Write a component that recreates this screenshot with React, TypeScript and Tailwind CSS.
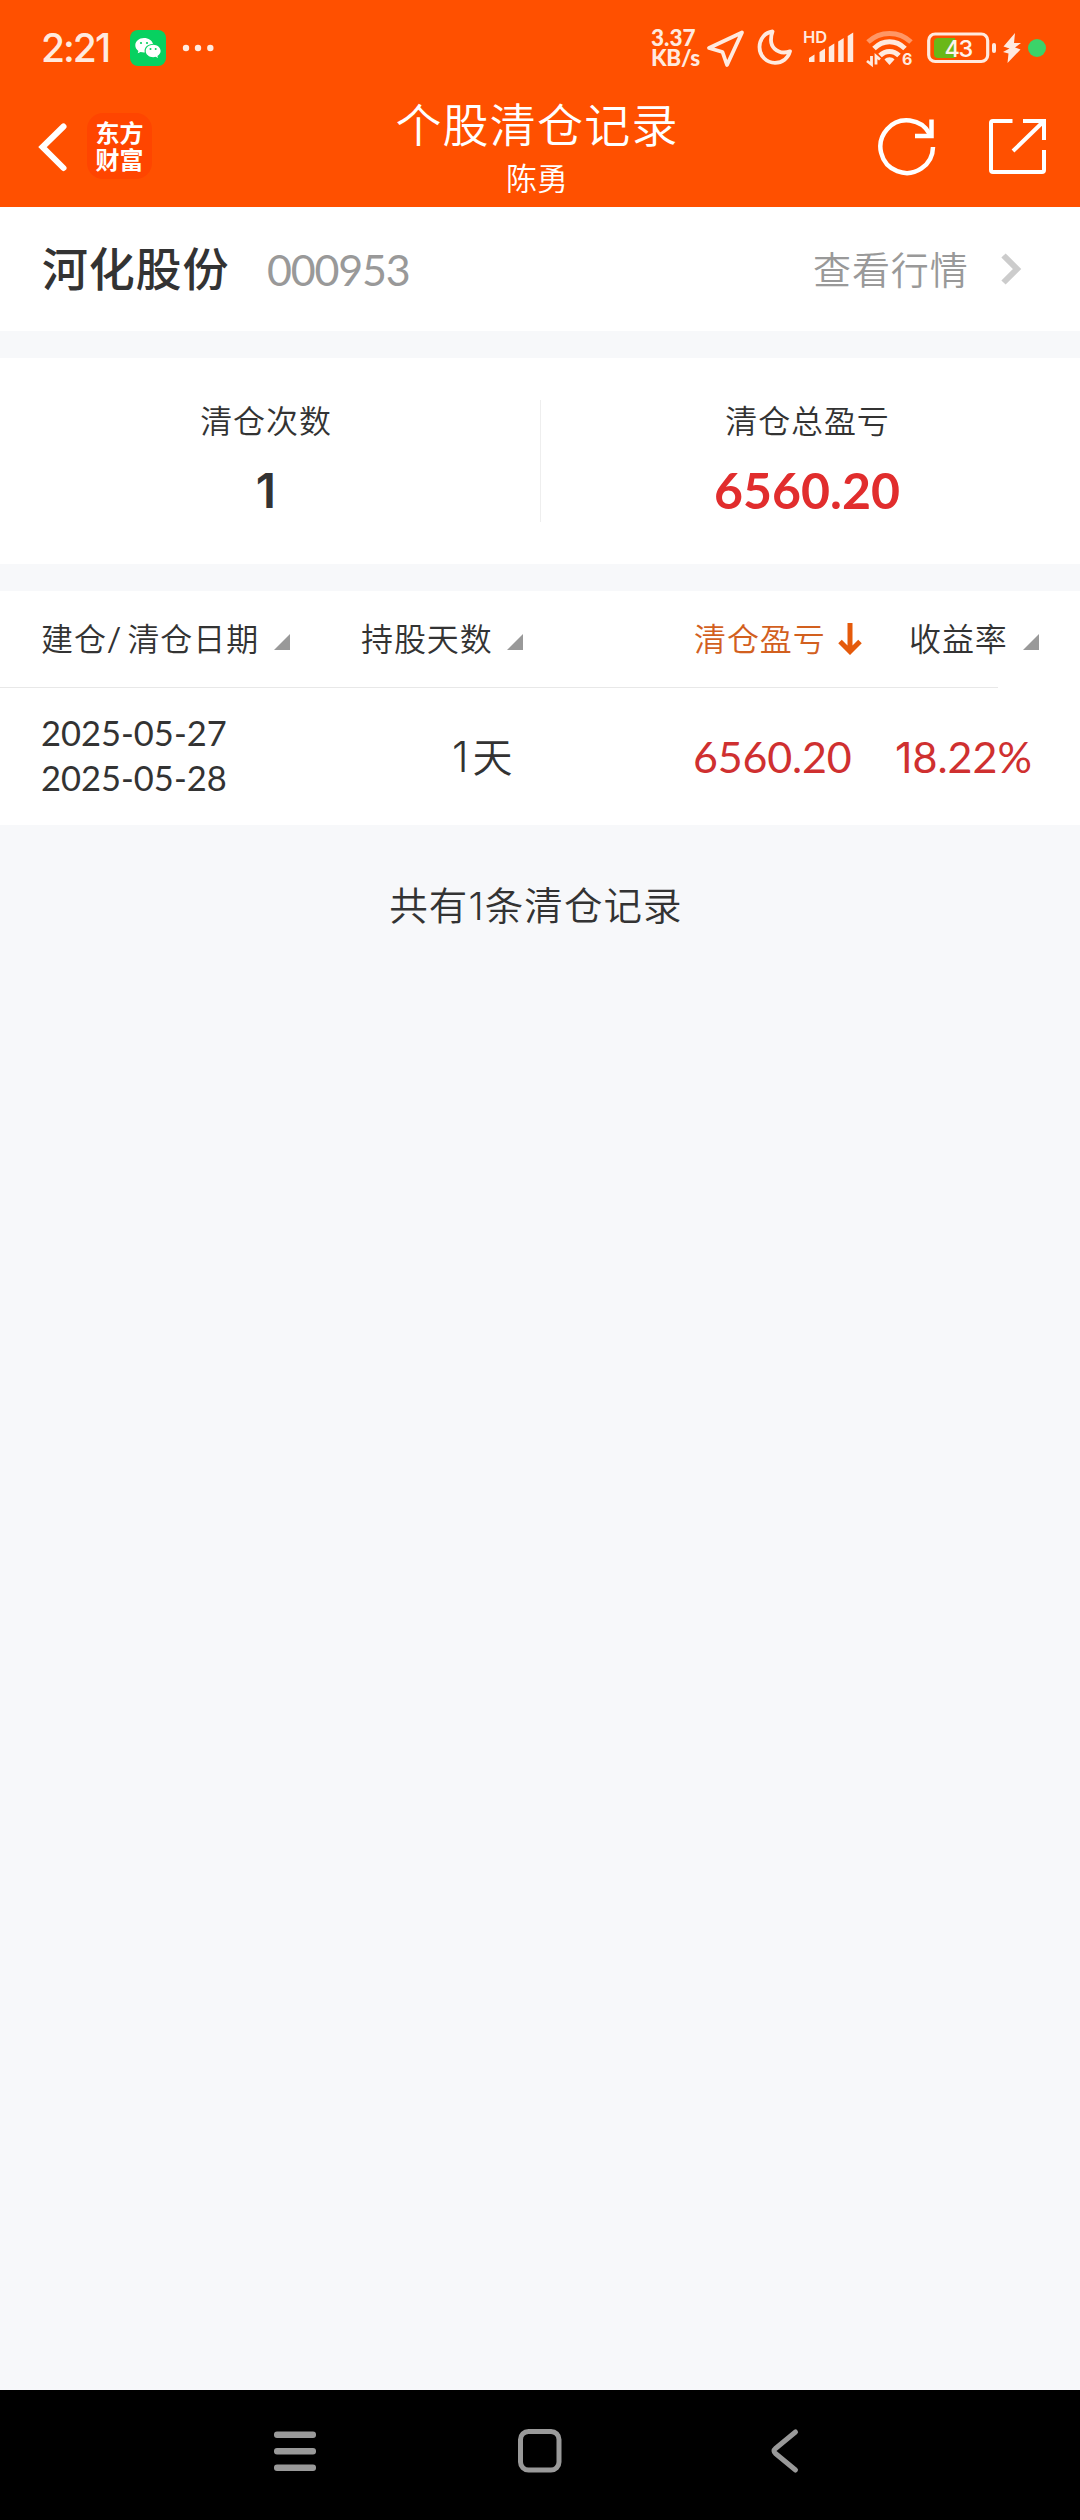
import React from "react";

const StatusBar: React.FC = () => {
  return (
    <div className="flex h-24 items-center pl-[41px] text-[#ffeadf]">
      <span className="w-[89px] shrink-0 font-['Inter'] text-[39px] font-medium leading-[50px] tracking-[-2px]">2:21</span>
      {/* WeChat */}
      <svg className="w-9 h-9" viewBox="0 0 36 36">
        <rect width="36" height="36" rx="8" fill="#07d160" />
        <path
          d="M14 8c-5 0-8.7 3.3-8.7 7.3 0 2.3 1.2 4.3 3.1 5.6l-.7 2.4 2.9-1.4c1.1.3 2.2.5 3.4.5h.8c-1.1-4.500 2.600-8.500 7.800-8.500h.4C22.200 10.500 18.500 8 14 8z"
          fill="#fff"
        />
        <path
          d="M23.200 14.800c-4.200 0-7.500 2.800-7.500 6.200s3.300 6.200 7.500 6.200c.9 0 1.700-.1 2.500-.4l2.300 1.200-.6-2c1.900-1.200 3.200-2.900 3.200-5 0-3.400-3.300-6.200-7.400-6.200z"
          fill="#fff"
        />
        <circle cx="11" cy="13" r="1.1" fill="#07d160" />
        <circle cx="17" cy="13" r="1.1" fill="#07d160" />
        <circle cx="20.500" cy="19" r="1" fill="#07d160" />
        <circle cx="25.700" cy="19" r="1" fill="#07d160" />
      </svg>
      <svg className="ml-4 w-8 h-3" viewBox="0 0 32 12" fill="currentColor">
        <circle cx="4" cy="6" r="3.200" />
        <circle cx="16" cy="6" r="3.200" />
        <circle cx="28.300" cy="6" r="3.200" />
      </svg>
      <div className="ml-[437px] w-[54px] font-['Lato'] text-[22.500px] font-black leading-[20px]">
        <div>3.37</div>
        <div className="tracking-[-0.3px]">KB/s</div>
      </div>
      {/* Location */}
      <svg
        className="w-[40px] h-[40px]"
        viewBox="0 0 40 40"
        fill="none"
        stroke="currentColor"
        strokeWidth="3.800"
        strokeLinejoin="round"
      >
        <path d="M37 4.500 4 20l13.500 4 4.500 13z" />
      </svg>
      {/* Moon */}
      <svg
        className="ml-[11px] w-[38px] h-[40px]"
        viewBox="0 0 38 40"
        fill="none"
        stroke="currentColor"
        strokeWidth="3.800"
        strokeLinejoin="round"
      >
        <path d="M16.500 3.500C8.500 4.500 3.500 11.500 3.500 19c0 9 7 15.800 15.500 15.800 7.500 0 13-4.500 15-11.500-2 .8-4 1.200-6 1.200-7.500 0-13-5.500-13-12.500 0-3 .5-6 1.500-8.500z" />
      </svg>
      {/* HD signal */}
      <svg className="ml-[9px] w-[52px] h-[44px] overflow-visible" viewBox="0 -4 52 44" fill="currentColor">
        <text x="0" y="13" fontFamily="Inter" fontWeight="600" fontSize="16.500">HD</text>
        <path d="M6 28l5.500-3.500V32H6zM16.500 22l5.500-3.500V32h-5.500zM25.800 17l5.500-3.500V32h-5.500zM35.200 11.500l5.500-3.500V32h-5.500zM44.700 6l5.500-3.500V32h-5.500z" />
      </svg>
      {/* Wi-Fi */}
      <svg className="ml-[11px] w-[48px] h-[44px] overflow-visible" viewBox="0 -4 48 44" fill="none" stroke="currentColor">
        <path d="M2 12C14 .5 33 .5 45 12" strokeWidth="5" opacity=".45" />
        <path d="M8 18.500c9-9 22-9 31 0" strokeWidth="5" />
        <path d="M14 25.500c5.500-5.500 13.500-5.500 19 0" strokeWidth="5" />
        <path d="M18.500 29.500c2.500-3 7.500-3 10 0L23.500 35z" fill="currentColor" stroke="none" />
        <path d="M1 31l4.500 3.500V26M10 34.500V26l4 3.500" strokeWidth="2.800" />
        <text x="36" y="34.500" fill="currentColor" stroke="none" fontFamily="Inter" fontWeight="700" fontSize="16">
          6
        </text>
      </svg>
      {/* Battery */}
      <svg className="ml-[13px] w-[70px] h-[32px]" viewBox="0 0 70 32" fill="none">
        <rect x="1.700" y="2" width="59" height="27.500" rx="6.500" stroke="currentColor" strokeWidth="3.200" />
        <rect x="65" y="11" width="4" height="10" rx="2" fill="currentColor" />
        <path d="M11 6h17v20H11a4 4 0 0 1-4-4V10a4 4 0 0 1 4-4z" fill="#6ab818" />
        <text x="17.500" y="24.500" fill="#fff3ec" fontFamily="Inter" fontWeight="500" fontSize="23.500" letterSpacing="-1.500">
          43
        </text>
      </svg>
      <svg className="ml-[5px] w-[20px] h-[32px]" viewBox="0 0 20 32" fill="currentColor">
        <path d="M13 1 1.500 14.500l6 2L1 20l5.500 1.500L5.500 31 18.500 17.500l-5.500-2L19 11h-7z" />
      </svg>
      <div className="ml-[6px] w-[18px] h-[18px] rounded-full bg-[#3bd369]"></div>
    </div>
  );
};

const Navbar: React.FC = () => {
  return (
    <nav className="flex h-[111px] pl-9 text-white">
      <svg
        className="mt-[24px] w-[34px] h-[54px]"
        viewBox="0 0 34 54"
        fill="none"
        stroke="currentColor"
        strokeWidth="6"
        strokeLinecap="round"
      >
        <path d="M27.500 6.500 6.500 27l21 21" />
      </svg>
      <div className="ml-[17px] mt-[17px] flex w-[65px] h-[66px] flex-col items-center rounded-[16px] bg-[#ff4500] pt-[6px] text-[24px] font-bold leading-[27px]">
        <span>东方</span>
        <span>财富</span>
      </div>
      <div className="ml-[185px] flex w-[400px] flex-col items-center">
        <h1 className="mt-[4px] text-[46px] font-[350] leading-[50px] tracking-[1.200px]">个股清仓记录</h1>
        <div className="mt-[10px] text-[31px] font-[350] leading-[36px]">陈勇</div>
      </div>
      {/* Refresh */}
      <svg
        className="ml-[139px] mt-[20px] w-[62px] h-[62px]"
        viewBox="0 0 62 62"
        fill="none"
        stroke="currentColor"
        strokeWidth="4.500"
      >
        <path d="M57 31A26.300 26.300 0 1 1 54 18.500" />
        <path d="M55.500 3.500V20H39" />
      </svg>
      {/* Share */}
      <svg
        className="ml-[48px] mt-[20px] w-[62px] h-[62px]"
        viewBox="0 0 62 62"
        fill="none"
        stroke="currentColor"
        strokeWidth="4"
      >
        <path d="M26.500 5H7a2 2 0 0 0-2 2v47a2 2 0 0 0 2 2h49a2 2 0 0 0 2-2V34" />
        <path d="M37 5h21v19M27 35 58 5" />
      </svg>
    </nav>
  );
};

const SortMark: React.FC = () => {
  return (
    <svg className="w-4 h-4 translate-y-[3px]" viewBox="0 0 16 16">
      <path d="M16 0v16H0z" fill="#999" />
    </svg>
  );
};

const One: React.FC = () => <span className="font-['Inter']">1</span>;

export default function App() {
  return (
    <div className="flex w-[1080px] h-[2520px] flex-col bg-[#f7f8fa] font-['Lato','Noto_Sans_CJK_SC',sans-serif] text-[#333]">
      <header className="h-[207px] bg-[#ff5000]">
        <StatusBar />
        <Navbar />
      </header>

      {/* Stock */}
      <section className="flex h-[124px] items-center bg-white pl-[42px]">
        <h2 className="w-[225px] text-[46px] font-medium leading-none tracking-[0.800px]">河化股份</h2>
        <span className="w-[546px] text-[43px] leading-none tracking-[-1.200px] text-[#999]">000953</span>
        <span className="w-[188px] text-[38px] font-[350] leading-none tracking-[0.900px] text-[#999]">查看行情</span>
        <svg className="w-[22px] h-[34px]" viewBox="0 0 22 34" fill="none" stroke="#ccc" strokeWidth="6">
          <path d="M2.500 3.500 16 17 2.500 30.500" />
        </svg>
      </section>

      {/* Totals */}
      <section className="mt-[27px] flex h-[206px] items-center bg-white">
        <div className="flex w-[540px] flex-col items-center pr-[8px]">
          <div className="text-[32px] font-[350] leading-[38px] tracking-[0.900px]">清仓次数</div>
          <div className="mt-[20px] text-[48px] font-semibold leading-[60px]">
            <One />
          </div>
        </div>
        <div className="w-px h-[122px] bg-[#eee]"></div>
        <div className="flex flex-1 flex-col items-center pr-[6px]">
          <div className="text-[32px] font-[350] leading-[38px] tracking-[0.900px]">清仓总盈亏</div>
          <div className="mt-[20px] mr-[1px] text-[50px] font-bold leading-[60px] text-[#e12d2d]">6560.20</div>
        </div>
      </section>

      {/* Records */}
      <section className="mt-[27px] h-[234px] bg-white">
        <div className="flex h-24 items-center pl-[41px] text-[32px] font-[350] leading-none tracking-[0.900px]">
          <span className="w-[233px] whitespace-nowrap">
            建仓<span className="font-normal tracking-[-1px]">/ </span>清仓日期
          </span>
          <SortMark />
          <span className="ml-[71px] w-[146px]">持股天数</span>
          <SortMark />
          <span className="ml-[171px] w-[144px] text-[#d2601e]">清仓盈亏</span>
          <svg className="w-[24px] h-[32px]" viewBox="0 0 24 32" fill="none" stroke="#e55a0b" strokeWidth="5">
            <path d="M12 0v28M2 18.500l10 10 10-10" />
          </svg>
          <span className="ml-[47px] w-[114px]">收益率</span>
          <SortMark />
        </div>
        <div className="w-[998px] h-px bg-[#e8e8e8]"></div>
        <div className="flex h-[137px] items-center pl-[41px] text-[43px] leading-none">
          <div className="w-[411px] pb-[3px] text-[34.500px] leading-[45px]">
            <div>2025-05-27</div>
            <div>2025-05-28</div>
          </div>
          <div className="w-[241px] text-[40px]">
            <span className="mr-[4px] font-['Inter'] text-[42px] font-[350]">1</span>
            <span className="font-[350]">天</span>
          </div>
          <div className="w-[202px] tracking-[-0.200px] text-[#cf3030]">6560.20</div>
          <div className="text-[#cf3030]">
            <One />
            8.22%
          </div>
        </div>
      </section>

      <p className="mt-[55px] mr-[8px] text-center text-[38.500px] font-[350] leading-[50px] tracking-[1.100px]">
        共有
        <One />
        条清仓记录
      </p>

      {/* System navigation */}
      <footer className="mt-auto flex h-[130px] bg-black pl-[274px] pt-[38px]">
        <svg className="w-[42px] h-[46px]" viewBox="0 0 42 46" fill="#999">
          <rect y="3.500" width="42" height="6.500" rx="3" />
          <rect y="20" width="42" height="6.500" rx="3" />
          <rect y="36.500" width="42" height="6.500" rx="3" />
        </svg>
        <svg className="ml-[201px] w-[46px] h-[46px]" viewBox="0 0 46 46" fill="none" stroke="#999" strokeWidth="5">
          <rect x="3.500" y="3.500" width="38.500" height="38.500" rx="8" />
        </svg>
        <svg
          className="ml-[206px] w-[32px] h-[46px]"
          viewBox="0 0 32 46"
          fill="none"
          stroke="#999"
          strokeWidth="5"
          strokeLinecap="round"
        >
          <path d="M26.500 4 6.500 20.500q-3 2.500 0 5L26.500 42" />
        </svg>
      </footer>
    </div>
  );
}
